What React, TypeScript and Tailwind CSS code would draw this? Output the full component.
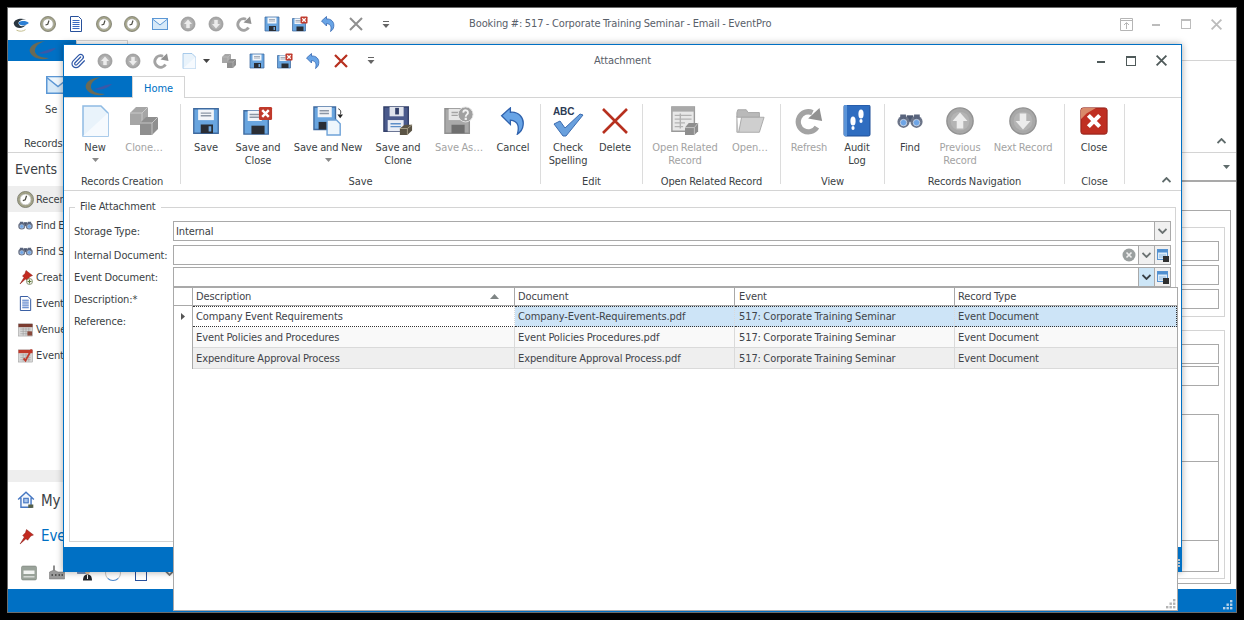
import type { ReactNode } from "react";
import { Paperclip } from "lucide-react";

function Ico({ s = 32, children }: { s?: number; children: ReactNode }) {
  return (
    <svg width={s} height={s} viewBox="0 0 32 32" className="block shrink-0">
      {children}
    </svg>
  );
}

type IconProps = { s?: number };

function Clock({ s = 16 }: IconProps) {
  return (
    <Ico s={s}>
      <circle cx="16" cy="16" r="13" fill="#fff" stroke="#a3a388" strokeWidth="4" />
      <circle cx="16" cy="16" r="15.2" fill="none" stroke="#5f6052" strokeWidth="1.2" />
      <circle cx="16" cy="16" r="10.5" fill="none" stroke="#77776a" strokeWidth="1" />
      <path d="M18 9 L15.5 16.5 L11 18" fill="none" stroke="#4c4c44" strokeWidth="2.4" />
    </Ico>
  );
}

function DocLines({ s = 16 }: IconProps) {
  return (
    <Ico s={s}>
      <path d="M5 1 H21 L27 7 V31 H5 Z" fill="#fff" stroke="#27509b" strokeWidth="2" />
      <path d="M9 9 H23 M9 13 H23 M9 17 H23 M9 21 H23 M9 25 H23" stroke="#3b6bc0" strokeWidth="2" />
    </Ico>
  );
}

function Mail({ s = 16 }: IconProps) {
  return (
    <Ico s={s}>
      <rect x="1" y="5" width="30" height="22" fill="#d6e9f8" stroke="#5b97d5" strokeWidth="2" />
      <path d="M1 6 L16 18 L31 6" fill="#eef6fc" stroke="#5b97d5" strokeWidth="2" />
    </Ico>
  );
}

function ArrowCircle({ s = 16, down = false }: IconProps & { down?: boolean }) {
  return (
    <Ico s={s}>
      <circle cx="16" cy="16" r="14" fill="#a8a8a8" stroke="#929292" strokeWidth="1.5" />
      <circle cx="16" cy="16" r="10" fill="#b4b4b4" />
      <path
        d={down ? "M16 25 L24 16 H19.5 V8 H12.5 V16 H8 Z" : "M16 7 L24 16 H19.5 V24 H12.5 V16 H8 Z"}
        fill="#ececec"
      />
    </Ico>
  );
}

function Refresh({ s = 16 }: IconProps) {
  return (
    <Ico s={s}>
      <path d="M25 23 A11.5 11.5 0 1 1 20 6.5" fill="none" stroke="#a3a3a3" strokeWidth="6" />
      <path d="M15 13 L31 16 L28 1 Z" fill="#919191" />
    </Ico>
  );
}

function Floppy({ s = 32, tone = "#69a5df" }: IconProps & { tone?: string }) {
  return (
    <Ico s={s}>
      <path d="M2 2 H30 V30 H2 Z" fill={tone} stroke="#3f6a9f" strokeWidth="1.5" />
      <rect x="7" y="3" width="18" height="12" fill="#f2f5f9" />
      <path d="M10 7 H22 M10 10 H22" stroke="#8b96a5" strokeWidth="1.5" />
      <rect x="10" y="20" width="14" height="10" fill="#2a2e35" />
      <rect x="19" y="22" width="3" height="6" fill="#6ea6dc" />
    </Ico>
  );
}

function SaveClose({ s = 32 }: IconProps) {
  return (
    <Ico s={s}>
      <path d="M1 5 H27 V30 H1 Z" fill="#69a5df" stroke="#3f6a9f" strokeWidth="1.5" />
      <rect x="5" y="5" width="15" height="11" fill="#f2f5f9" />
      <path d="M7 9 H17 M7 12 H17" stroke="#8b96a5" strokeWidth="1.5" />
      <rect x="9" y="21" width="14" height="9" fill="#2a2e35" />
      <rect x="17" y="1" width="14" height="14" rx="1.5" fill="#c0392b" />
      <path d="M20.5 4.5 L27.5 11.5 M27.5 4.5 L20.5 11.5" stroke="#fff" strokeWidth="2.6" />
    </Ico>
  );
}

function SaveNew({ s = 32 }: IconProps) {
  return (
    <Ico s={s}>
      <path d="M1 1 H24 V25 H1 Z" fill="#69a5df" stroke="#3f6a9f" strokeWidth="1.5" />
      <rect x="5" y="1" width="15" height="11" fill="#f2f5f9" />
      <path d="M7 5 H17 M7 8 H17" stroke="#8b96a5" strokeWidth="1.5" />
      <rect x="6" y="17" width="10" height="8" fill="#2a2e35" />
      <path d="M15 15 H25 L29 19 V31 H15 Z" fill="#eef6fc" stroke="#6fa3d8" strokeWidth="1.5" />
      <path d="M27 3 C30 4 30 7 29 9" fill="none" stroke="#222" strokeWidth="1" />
      <path d="M26 9 H32 L29 13 Z" fill="#222" />
    </Ico>
  );
}

function SaveClone({ s = 32 }: IconProps) {
  return (
    <Ico s={s}>
      <path d="M1 1 H27 V27 H1 Z" fill="#4a5a8c" stroke="#33406a" strokeWidth="1.5" />
      <rect x="7" y="1" width="15" height="10" fill="#dfe3ec" />
      <rect x="13" y="2" width="4" height="7" fill="#33406a" />
      <rect x="5" y="15" width="17" height="12" fill="#e9edf5" />
      <path d="M8 19 H19 M8 22 H19" stroke="#5d8ec8" strokeWidth="1.5" />
      <path d="M18 24 L23 20 H31 V26 L26 31 H18 Z" fill="#5a5344" />
      <path d="M18 24 H26 V31 M26 24 L31 20" fill="none" stroke="#a89f88" strokeWidth="1" />
    </Ico>
  );
}

function SaveAs({ s = 32 }: IconProps) {
  return (
    <Ico s={s}>
      <path d="M1 3 H27 V29 H1 Z" fill="#a9a9a9" stroke="#909090" strokeWidth="1.5" />
      <rect x="5" y="3" width="16" height="12" fill="#e6e6e6" />
      <path d="M8 7 H18 M8 10 H18" stroke="#a3a3a3" strokeWidth="1.5" />
      <rect x="8" y="20" width="14" height="9" fill="#6f6f6f" />
      <circle cx="23" cy="9" r="8" fill="#a0a0a0" stroke="#e6e6e6" strokeWidth="1" />
      <path d="M20.5 7 C21 3.5 26 4 25.5 7.5 C25.3 9 23.2 9 23.2 11.5" fill="none" stroke="#f2f2f2" strokeWidth="2" />
      <rect x="22" y="12.5" width="2.4" height="2.4" fill="#f2f2f2" />
    </Ico>
  );
}

function Undo({ s = 32 }: IconProps) {
  return (
    <Ico s={s}>
      <path
        d="M3 10 L13 1 L13 6 C22 5 29 12 27.5 21 C27 26 24 29 21 31 C23 24 23 16 13 15 L13 20 Z"
        fill="#68a4e6"
        stroke="#2f62ad"
        strokeWidth="1.5"
      />
    </Ico>
  );
}

function Cross({ s = 16, color = "#8f8f8f", w = 4 }: IconProps & { color?: string; w?: number }) {
  return (
    <Ico s={s}>
      <path d="M4 4 L28 28 M28 4 L4 28" stroke={color} strokeWidth={w} />
    </Ico>
  );
}

function NewDoc({ s = 32 }: IconProps) {
  return (
    <Ico s={s}>
      <path d="M4 1 H22 L29 8 V31 H4 Z" fill="#e9f3fb" stroke="#8fbbe4" strokeWidth="1.5" />
      <path d="M4 31 L29 8 V31 Z" fill="#f6fafe" />
    </Ico>
  );
}

function Cubes({ s = 32 }: IconProps) {
  return (
    <Ico s={s}>
      <path d="M2 8 L8 2 H20 V14 L14 20 H2 Z" fill="#a6a6a6" />
      <path d="M2 8 H14 V20 M14 8 L20 2" fill="none" stroke="#c9c9c9" strokeWidth="1" />
      <path d="M12 18 L18 12 H30 V24 L24 30 H12 Z" fill="#8f8f8f" />
      <path d="M12 18 H24 V30 M24 18 L30 12" fill="none" stroke="#c4c4c4" strokeWidth="1" />
    </Ico>
  );
}

function CheckAbc({ s = 32 }: IconProps) {
  return (
    <Ico s={s}>
      <text x="1" y="10" fontSize="10" fontWeight="700" fill="#2b3a55" fontFamily="'Liberation Sans', sans-serif">
        ABC
      </text>
      <path d="M2 19 L8 16 L13 23 L28 9 L31 10 L14 31 H11 Z" fill="#69a0dd" stroke="#3c6cb0" strokeWidth="1" />
    </Ico>
  );
}

function OpenRelated({ s = 32 }: IconProps) {
  return (
    <Ico s={s}>
      <path d="M2 1 H26 V27 H2 Z" fill="#e8e8e8" stroke="#9a9a9a" strokeWidth="1.5" />
      <rect x="2" y="1" width="24" height="5" fill="#a9a9a9" />
      <path d="M5 10 H23 M5 14 H23 M5 18 H16 M5 22 H14 M11 8 V24" stroke="#b2b2b2" strokeWidth="1.5" />
      <path d="M16 23 L20 18 H30 V27 L26 31 H16 Z" fill="#8e8e8e" />
      <path d="M16 23 H26 V31 M26 23 L30 18" fill="none" stroke="#c5c5c5" strokeWidth="1" />
    </Ico>
  );
}

function Folder({ s = 32 }: IconProps) {
  return (
    <Ico s={s}>
      <path d="M2 7 L3 4 H12 L14 7 H26 V12 H2 Z" fill="#b9b9b9" stroke="#a5a5a5" />
      <path d="M2 11 V28 H26 L31 12 H7 L4 28" fill="#cfcfcf" stroke="#a8a8a8" />
    </Ico>
  );
}

function AuditBook({ s = 32 }: IconProps) {
  return (
    <Ico s={s}>
      <rect x="3" y="0" width="26" height="31" rx="1.5" fill="#2f6dc0" stroke="#1f4f97" />
      <rect x="3" y="0" width="3" height="31" fill="#5b94d8" />
      <ellipse cx="12" cy="16" rx="2.6" ry="4.5" fill="#fff" />
      <ellipse cx="12" cy="23" rx="1.6" ry="2" fill="#fff" />
      <ellipse cx="20" cy="9" rx="2.6" ry="4.5" fill="#fff" />
      <ellipse cx="20" cy="16" rx="1.6" ry="2" fill="#fff" />
    </Ico>
  );
}

function Binoculars({ s = 32 }: IconProps) {
  return (
    <Ico s={s}>
      <rect x="12" y="9" width="8" height="8" fill="#4c5770" />
      <circle cx="8" cy="17" r="7.5" fill="#6b7488" />
      <circle cx="24" cy="17" r="7.5" fill="#6b7488" />
      <rect x="4" y="8" width="7" height="6" fill="#59647d" />
      <rect x="21" y="8" width="7" height="6" fill="#59647d" />
      <circle cx="8" cy="18" r="4" fill="#6ea5e6" stroke="#cfd9e8" />
      <circle cx="24" cy="18" r="4" fill="#6ea5e6" stroke="#cfd9e8" />
    </Ico>
  );
}

function CloseBox({ s = 32 }: IconProps) {
  return (
    <Ico s={s}>
      <rect x="2" y="2" width="28" height="28" rx="2.5" fill="#bf2f22" stroke="#8f1f16" />
      <path d="M2 14 L2 4 L4 2 H18 L8 8 Z" fill="#d98a6a" />
      <path d="M10 10 L22 22 M22 10 L10 22" stroke="#fff" strokeWidth="4.5" />
    </Ico>
  );
}

function Pin({ s = 16, plus = false }: IconProps & { plus?: boolean }) {
  return (
    <Ico s={s}>
      <path d="M16 3 L29 13 L24 15 L18 23 L15 20 L4 30 L12 17 L9 14 L14 9 Z" fill="#c22a20" stroke="#8a1a14" />
      {plus && (
        <>
          <circle cx="23" cy="25" r="6" fill="#f3f3ea" stroke="#6c7a55" strokeWidth="1.5" />
          <path d="M23 21 V29 M19 25 H27" stroke="#5c7a3c" strokeWidth="2" />
        </>
      )}
    </Ico>
  );
}

function CalendarIco({ s = 16, red = false }: IconProps & { red?: boolean }) {
  return (
    <Ico s={s}>
      <rect x="1" y="4" width="30" height="26" fill="#d8d8d8" stroke="#8f8f8f" />
      <rect x="1" y="4" width="30" height="7" fill={red ? "#c0392b" : "#7a3b30"} />
      <path d="M5 15 H27 M5 20 H27 M5 25 H27 M11 12 V29 M17 12 V29 M23 12 V29" stroke="#9a9a9a" strokeWidth="1.2" />
      {red ? (
        <path d="M12 22 L16 27 L29 3" fill="none" stroke="#c0392b" strokeWidth="4" />
      ) : (
        <rect x="20" y="20" width="10" height="9" fill="#8a4a3c" />
      )}
    </Ico>
  );
}

function House({ s = 18 }: IconProps) {
  return (
    <Ico s={s}>
      <path d="M2 15 L16 2 L30 15 M7 12 V29 H25 V12" fill="#f3f7fc" stroke="#4677c2" strokeWidth="2.5" />
      <rect x="12" y="13" width="8" height="8" fill="#a8c4ea" stroke="#4677c2" strokeWidth="2" />
      <rect x="20" y="24" width="9" height="6" fill="#55604a" />
    </Ico>
  );
}

function PrinterBox({ s = 16 }: IconProps) {
  return (
    <Ico s={s}>
      <rect x="1" y="2" width="30" height="28" rx="3" fill="#9aa39a" stroke="#6f766f" />
      <rect x="5" y="11" width="22" height="7" fill="#f2f4f2" />
      <rect x="5" y="22" width="22" height="3" fill="#d5d9d5" />
    </Ico>
  );
}

function Factory({ s = 16 }: IconProps) {
  return (
    <Ico s={s}>
      <rect x="8" y="1" width="4" height="12" fill="#8e8e8e" />
      <path d="M1 14 L10 10 L18 14 L31 14 V28 H1 Z" fill="#9a9a9a" stroke="#6f6f6f" />
      <path d="M5 20 H8 M12 20 H15 M19 20 H22 M25 20 H28" stroke="#3a3a3a" strokeWidth="3" />
    </Ico>
  );
}

function Person({ s = 16 }: IconProps) {
  return (
    <Ico s={s}>
      <rect x="1" y="5" width="18" height="12" fill="#6c8fc4" stroke="#3d5a8c" />
      <circle cx="21" cy="13" r="5" fill="#e9c39b" />
      <path d="M12 31 C12 22 16 19 21 19 C26 19 30 22 30 31 Z" fill="#23262b" />
      <path d="M21 20 V28" stroke="#f4f4f4" strokeWidth="2" />
    </Ico>
  );
}

function Logo() {
  return (
    <svg width="36" height="22" viewBox="0 0 36 22" className="block">
      <path d="M21 1 C8 2 3 9 7 14 C10 18 18 21 25 18 C17 18 10 15 11 10 C11.5 6 15 3 21 1 Z" fill="#6a6a55" />
      <path d="M14 13 C20 12 26 8 32 8 C28 12 21 15 14 13 Z" fill="#3a58a8" />
    </svg>
  );
}

function TinyLogo() {
  return (
    <Ico s={18}>
      <path d="M3 15 C4 8 14 5 25 8 C15 7 10 12 12 16 C14 21 20 21 25 17 C20 26 5 25 3 15 Z" fill="#2a3640" />
      <path d="M12 13 C17 10 25 10 30 14 C25 19 17 20 12 16 Z" fill="#2c7fd4" />
      <path d="M8 27 C14 30 20 29 24 26" fill="none" stroke="#b9b27a" strokeWidth="1.5" />
    </Ico>
  );
}

function Caret({ color = "#6b6b6b" }: { color?: string }) {
  return (
    <svg width="7" height="4" viewBox="0 0 7 4" className="block">
      <path d="M0 0 H7 L3.5 4 Z" fill={color} />
    </svg>
  );
}

function QatMore() {
  return (
    <svg width="8" height="7" viewBox="0 0 8 7" className="block">
      <path d="M1 0.5 H7" stroke="#666" />
      <path d="M0.5 3 H7.5 L4 7 Z" fill="#666" />
    </svg>
  );
}

function Chevron({ up = false, color = "#5f6b6b" }: { up?: boolean; color?: string }) {
  return (
    <svg width="9" height="6" viewBox="0 0 9 6" className="block">
      <path d={up ? "M0.5 5 L4.5 1 L8.5 5" : "M0.5 1 L4.5 5 L8.5 1"} fill="none" stroke={color} strokeWidth="1.8" />
    </svg>
  );
}

function Grip({ color = "#b3b3b3" }: { color?: string }) {
  return (
    <svg width="10" height="10" viewBox="0 0 10 10" className="block">
      {[
        [7, 0],
        [3.5, 3.5],
        [7, 3.5],
        [0, 7],
        [3.5, 7],
        [7, 7],
      ].map(([x, y]) => (
        <rect key={`${x}-${y}`} x={x} y={y} width="2.4" height="2.4" fill={color} />
      ))}
    </svg>
  );
}

function MiniCal() {
  return (
    <svg width="12" height="13" viewBox="0 0 12 13" className="block">
      <rect x="0.5" y="0.5" width="10" height="10" fill="#dcebf8" stroke="#5a95d2" />
      <rect x="0.5" y="0.5" width="10" height="3" fill="#4f8fd0" />
      <path d="M2 6 H9 M2 8 H9" stroke="#8db8e0" />
      <rect x="6" y="7" width="6" height="6" fill="#2f3030" />
    </svg>
  );
}

function Qi({ w = 28, children }: { w?: number; children: ReactNode }) {
  return (
    <div className="flex shrink-0 items-center justify-center" style={{ width: w }}>
      {children}
    </div>
  );
}

function RibbonBtn({
  w,
  icon,
  label,
  off = false,
  caret = false,
}: {
  w: number;
  icon: ReactNode;
  label: ReactNode;
  off?: boolean;
  caret?: boolean;
}) {
  return (
    <div className="flex shrink-0 flex-col items-center" style={{ width: w }}>
      <div className="mt-[1px] flex h-[32px] items-center justify-center">{icon}</div>
      <div className={`mt-[4px] whitespace-nowrap text-center leading-[13px] ${off ? "text-[#a3a3a3]" : "text-[#3b3f45]"}`}>
        {label}
      </div>
      {caret && (
        <div className="mt-[4px]">
          <Caret color="#8a8a8a" />
        </div>
      )}
    </div>
  );
}

function RibbonGroup({ w, caption, children }: { w: number; caption: string; children: ReactNode }) {
  return (
    <div className="flex h-[80px] shrink-0 flex-col border-r border-[#dcdcdc]" style={{ width: w }}>
      <div className="flex h-[71px] shrink-0">{children}</div>
      <div className="h-[14px] shrink-0 whitespace-nowrap text-center leading-[14px] text-[#3b3f45]">{caption}</div>
    </div>
  );
}

function Field({ label, right, text, star }: { label: string; right?: ReactNode; text?: string; star?: boolean }) {
  return (
    <div className="flex h-[20px] items-center pl-[4px] pr-[4px]">
      <div className="mt-[2px] w-[99px] shrink-0 whitespace-nowrap text-[#3b3f45]">
        {label}
        {star && <span className="text-[#3b3f45]">*</span>}
      </div>
      <div className="flex h-[20px] flex-1 items-center border border-[#a9a9a9] bg-white pl-[2px]">
        <span className="mt-[2px] flex-1 text-[#3b3f45]">{text}</span>
        {right}
      </div>
    </div>
  );
}

function DropBtn({ hot = false }: { hot?: boolean }) {
  return (
    <div
      className={`flex h-[18px] w-[16px] items-center justify-center border-l border-[#a9a9a9] ${hot ? "bg-[#cde6f7]" : "bg-[#f0f0f0]"}`}
    >
      <Chevron color={hot ? "#3a4045" : "#6b7272"} />
    </div>
  );
}

function CalBtn() {
  return (
    <div className="flex h-[18px] w-[16px] items-center justify-center border-l border-[#a9a9a9] bg-[#f0f0f0]">
      <MiniCal />
    </div>
  );
}

const rows = [
  ["Company Event Requirements", "Company-Event-Requirements.pdf", "517: Corporate Training Seminar", "Event Document"],
  ["Event Policies and Procedures", "Event Policies Procedures.pdf", "517: Corporate Training Seminar", "Event Document"],
  ["Expenditure Approval Process", "Expenditure Approval Process.pdf", "517: Corporate Training Seminar", "Event Document"],
];

function AttachmentGrid() {
  return (
    <div className="absolute left-[109px] top-[242px] h-[324px] w-[1005px] border border-[#a9a9a9] bg-white text-[#3f444a]">
      <div className="grid h-[18px] grid-cols-[19px_322px_220px_220px_1fr] border-b border-[#a9a9a9] leading-[17px]">
        <div className="border-r border-[#a9a9a9]" />
        <div className="flex items-center justify-between border-r border-[#a9a9a9] pl-[3px] pr-[15px]">
          <span>Description</span>
          <svg width="9" height="5" viewBox="0 0 9 5" className="block">
            <path d="M0 5 L4.5 0 L9 5 Z" fill="#7f8585" />
          </svg>
        </div>
        <div className="border-r border-[#a9a9a9] pl-[3px]">Document</div>
        <div className="border-r border-[#a9a9a9] pl-[4px]">Event</div>
        <div className="pl-[3px]">Record Type</div>
      </div>
      {rows.map((r, i) => (
        <div key={r[0]} className="grid h-[21px] grid-cols-[19px_322px_220px_220px_1fr] grid-rows-[21px] leading-[21px]">
          <div className="flex items-center justify-center border-r border-[#a9a9a9] bg-white">
            {i === 0 && (
              <svg width="4" height="7" viewBox="0 0 4 7" className="block">
                <path d="M0 0 L4 3.5 L0 7 Z" fill="#555" />
              </svg>
            )}
          </div>
          {i === 0 ? (
            <>
              <div className="border-y border-r border-dotted border-y-[#333] border-r-[#dadada] bg-white pl-[3px] leading-[20px]">
                {r[0]}
              </div>
              <div className="border-y border-r border-dotted border-y-[#333] border-r-[#dadada] bg-[#cde4f7] pl-[3px] leading-[20px]">
                {r[1]}
              </div>
              <div className="border-y border-r border-dotted border-y-[#333] border-r-[#dadada] bg-[#cde4f7] pl-[4px] leading-[20px]">
                {r[2]}
              </div>
              <div className="border border-l-0 border-dotted border-[#333] bg-[#cde4f7] pl-[3px] leading-[20px]">
                {r[3]}
              </div>
            </>
          ) : (
            <>
              {r.map((c, j) => (
                <div
                  key={c + j}
                  className={`h-[21px] border-b border-[#dadada] ${j < 3 ? "border-r" : ""} ${j === 2 ? "pl-[4px]" : "pl-[3px]"} ${i === 1 ? "bg-[#f9f9f9]" : "bg-[#efefef]"}`}
                >
                  {c}
                </div>
              ))}
            </>
          )}
        </div>
      ))}
      <div className="absolute bottom-[1px] right-[1px]">
        <Grip />
      </div>
    </div>
  );
}

function Attachment() {
  return (
    <div className="absolute left-[63px] top-[44px] flex h-[528px] w-[1119px] flex-col border border-[#0070c4] bg-white shadow-[0_0_7px_rgba(0,0,0,0.35)]">
      {/* title + quick access */}
      <div className="relative flex h-[31px] items-center">
        <Qi w={27}>
          <Paperclip size={16} color="#2f58a8" strokeWidth={1.8} />
        </Qi>
        <Qi><ArrowCircle /></Qi>
        <Qi><ArrowCircle down /></Qi>
        <Qi><Refresh /></Qi>
        <Qi><NewDoc s={16} /></Qi>
        <Qi w={12}>
          <div className="-ml-[6px]"><Caret color="#444" /></div>
        </Qi>
        <Qi><Cubes s={16} /></Qi>
        <Qi><Floppy s={16} /></Qi>
        <Qi><SaveClose s={16} /></Qi>
        <Qi><Undo s={16} /></Qi>
        <Qi><Cross color="#b7301f" w={4.5} /></Qi>
        <Qi w={32}><QatMore /></Qi>
        <div className="absolute left-[530px] top-[8px] text-[#59606a]">Attachment</div>
        <div className="ml-auto flex items-center">
          <Qi w={30}>
            <div className="mt-[2px] h-[2px] w-[8px] bg-[#4f5a5a]" />
          </Qi>
          <Qi w={30}>
            <div className="h-[10px] w-[10px] border border-t-2 border-[#4f5a5a]" />
          </Qi>
          <Qi w={30}>
            <Cross s={13} color="#4f5a5a" w={4.5} />
          </Qi>
          <div className="w-[5px]" />
        </div>
      </div>
      {/* tabs */}
      <div className="flex h-[22px] border-b border-[#d4d4d4]">
        <div className="flex h-[21px] w-[68px] items-center justify-center bg-[#0070c4]">
          <Logo />
        </div>
        <div className="h-[22px] w-[53px] border-x border-t border-[#d4d4d4] bg-white text-center leading-[24px] text-[#0070c4]">
          Home
        </div>
      </div>
      {/* ribbon */}
      <div className="relative flex h-[93px] border-b border-[#d4d4d4] pt-[6px]">
        <RibbonGroup w={117} caption="Records Creation">
          <RibbonBtn w={62} icon={<NewDoc />} label="New" caret />
          <RibbonBtn w={36} icon={<Cubes />} label="Clone…" off />
        </RibbonGroup>
        <RibbonGroup w={360} caption="Save">
          <RibbonBtn w={50} icon={<Floppy s={28} />} label="Save" />
          <RibbonBtn w={54} icon={<SaveClose s={30} />} label={<>Save and<br />Close</>} />
          <RibbonBtn w={86} icon={<SaveNew s={30} />} label="Save and New" caret />
          <RibbonBtn w={54} icon={<SaveClone s={30} />} label={<>Save and<br />Clone</>} />
          <RibbonBtn w={68} icon={<SaveAs s={30} />} label="Save As…" off />
          <RibbonBtn w={40} icon={<Undo s={28} />} label="Cancel" />
        </RibbonGroup>
        <RibbonGroup w={102} caption="Edit">
          <RibbonBtn w={54} icon={<CheckAbc />} label={<>Check<br />Spelling</>} />
          <RibbonBtn w={40} icon={<Cross s={32} color="#b7301f" w={2.6} />} label="Delete" />
        </RibbonGroup>
        <RibbonGroup w={138} caption="Open Related Record">
          <RibbonBtn w={84} icon={<OpenRelated s={30} />} label={<>Open Related<br />Record</>} off />
          <RibbonBtn w={46} icon={<Folder s={30} />} label="Open…" off />
        </RibbonGroup>
        <RibbonGroup w={104} caption="View">
          <RibbonBtn w={56} icon={<Refresh s={28} />} label="Refresh" off />
          <RibbonBtn w={40} icon={<AuditBook />} label={<>Audit<br />Log</>} />
        </RibbonGroup>
        <RibbonGroup w={180} caption="Records Navigation">
          <RibbonBtn w={50} icon={<Binoculars s={26} />} label="Find" />
          <RibbonBtn w={50} icon={<ArrowCircle s={30} />} label={<>Previous<br />Record</>} off />
          <RibbonBtn w={76} icon={<ArrowCircle s={30} down />} label="Next Record" off />
        </RibbonGroup>
        <RibbonGroup w={60} caption="Close">
          <RibbonBtn w={58} icon={<CloseBox s={30} />} label="Close" />
        </RibbonGroup>
        <div className="ml-[37px] mt-[73px]">
          <Chevron up />
        </div>
      </div>
      {/* form */}
      <div className="flex-1 px-[5px] pb-[5px] pt-[16px]">
        <div className="relative flex h-[335px] flex-col border border-[#d4d4d4] pt-[13px]">
          <div className="absolute -top-[8px] left-[5px] bg-white px-[5px] leading-[14px] text-[#3b3f45]">
            File Attachment
          </div>
          <Field label="Storage Type:" text="Internal" right={<DropBtn />} />
          <div className="h-[4px]" />
          <Field
            label="Internal Document:"
            right={
              <>
                <svg width="14" height="14" viewBox="0 0 14 14" className="mr-[2px] block">
                  <circle cx="7" cy="7" r="6.5" fill="#9a9f9f" />
                  <path d="M4.5 4.5 L9.5 9.5 M9.5 4.5 L4.5 9.5" stroke="#eee" strokeWidth="1.6" />
                </svg>
                <DropBtn />
                <CalBtn />
              </>
            }
          />
          <div className="h-[2px]" />
          <Field
            label="Event Document:"
            right={
              <>
                <DropBtn hot />
                <CalBtn />
              </>
            }
          />
          <div className="h-[2px]" />
          <Field label="Description:" star />
          <div className="h-[2px]" />
          <Field label="Reference:" />
        </div>
      </div>
      <div className="relative h-[24px] bg-[#0070c4]">
        <div className="absolute right-[1px] top-[12px] flex flex-col gap-[1px]">
          <div className="h-[2px] w-[3px] bg-[#b5c4cf]" />
          <div className="h-[2px] w-[3px] bg-[#b5c4cf]" />
          <div className="h-[2px] w-[3px] bg-[#b5c4cf]" />
        </div>
      </div>
      <AttachmentGrid />
    </div>
  );
}

function SideRow({ icon, label, on = false }: { icon: ReactNode; label: string; on?: boolean }) {
  return (
    <div className={`flex h-[26px] shrink-0 items-center pl-[7px] text-[#3b3f45] ${on ? "bg-[#eeeeee]" : ""}`}>
      <div className="flex w-[21px] justify-center">{icon}</div>
      <span className="mt-[2px]">{label}</span>
    </div>
  );
}

function Sidebar() {
  return (
    <div className="flex w-[240px] shrink-0 flex-col">
      <div className="h-[33px] shrink-0 pl-[7px] text-[14px] leading-[33px] text-[#3b3f45]">Events</div>
      <SideRow on icon={<Clock s={17} />} label="Recen" />
      <SideRow icon={<Binoculars s={15} />} label="Find E" />
      <SideRow icon={<Binoculars s={15} />} label="Find S" />
      <SideRow icon={<Pin plus />} label="Creat" />
      <SideRow icon={<DocLines s={15} />} label="Event" />
      <SideRow icon={<CalendarIco s={15} />} label="Venue" />
      <SideRow icon={<CalendarIco s={15} red />} label="Event" />
      <div className="flex-1" />
      <div className="h-[12px] shrink-0 bg-[#eeeeee]" />
      <div className="flex h-[36px] shrink-0 items-center pl-[9px] text-[15px] text-[#3b3f45]">
        <House />
        <span className="ml-[6px] mt-[2px]">My</span>
      </div>
      <div className="flex h-[36px] shrink-0 items-center pl-[10px] text-[15px] text-[#0070c4]">
        <Pin s={17} />
        <span className="ml-[6px]">Eve</span>
      </div>
      <div className="flex h-[35px] shrink-0 items-center pt-[3px]">
        <div className="w-[7px]" />
        <Qi><PrinterBox /></Qi>
        <Qi><Factory /></Qi>
        <Qi><Person /></Qi>
        <Qi>
          <div className="h-[16px] w-[16px] rounded-full border border-[#c4c4c4] border-b-[#4a85c9]" />
        </Qi>
        <Qi>
          <div className="h-[15px] w-[12px] border border-[#27509b]" />
        </Qi>
        <Qi><Chevron color="#777" /></Qi>
      </div>
    </div>
  );
}

function Backdrop() {
  return (
    <div className="flex h-[604px] w-[1228px] flex-col bg-white">
      <div className="relative flex h-[32px] shrink-0 items-center">
        <Qi w={26}><TinyLogo /></Qi>
        <Qi><Clock /></Qi>
        <Qi><DocLines /></Qi>
        <Qi><Clock /></Qi>
        <Qi><Clock /></Qi>
        <Qi><Mail /></Qi>
        <Qi><ArrowCircle /></Qi>
        <Qi><ArrowCircle down /></Qi>
        <Qi><Refresh /></Qi>
        <Qi><Floppy s={16} /></Qi>
        <Qi><SaveClose s={16} /></Qi>
        <Qi><Undo s={16} /></Qi>
        <Qi><Cross /></Qi>
        <Qi w={32}><QatMore /></Qi>
        <div className="absolute left-[461px] top-[8px] whitespace-nowrap text-[#59606a]">
          Booking #: 517 - Corporate Training Seminar - Email - EventPro
        </div>
        <div className="ml-auto flex items-center">
          <Qi w={30}>
            <svg width="13" height="13" viewBox="0 0 13 13" className="block">
              <path d="M0.5 0.5 H12.5 V12.5 H0.5 Z M0.5 2.5 H12.5 M6.5 11 V5 M4 7 L6.5 4.5 L9 7" fill="none" stroke="#b5b5b5" />
            </svg>
          </Qi>
          <Qi w={30}>
            <div className="mt-[2px] h-[2px] w-[8px] bg-[#bcbcbc]" />
          </Qi>
          <Qi w={30}>
            <div className="h-[10px] w-[10px] border border-t-2 border-[#bcbcbc]" />
          </Qi>
          <Qi w={30}>
            <Cross s={13} color="#bcbcbc" w={4.5} />
          </Qi>
          <div className="w-[5px]" />
        </div>
      </div>
      <div className="flex h-[21px] shrink-0 border-b border-[#d4d4d4]">
        <div className="flex h-[21px] w-[68px] items-center justify-center bg-[#0070c4]">
          <Logo />
        </div>
        <div className="h-[21px] w-[52px] border-x border-t border-[#d4d4d4]" />
      </div>
      <div className="flex h-[92px] shrink-0 items-end border-b border-[#d4d4d4]">
        <div className="relative flex h-[91px] w-[100px] flex-col justify-end pl-[16px] leading-[14px] text-[#3b3f45]">
          <div className="absolute left-[38px] top-[12px]">
            <Mail s={24} />
            <div className="-ml-[1px] mt-[6px]">Se</div>
          </div>
          <div className="mb-[1px]">Records</div>
        </div>
        <div className="mb-[8px] ml-auto mr-[10px]">
          <Chevron up />
        </div>
      </div>
      <div className="flex min-h-0 flex-1">
        <Sidebar />
        <div className="flex flex-1 flex-col">
          <div className="flex h-[27px] shrink-0 items-center justify-end pr-[6px]">
            <Caret color="#5f6b6b" />
          </div>
          <div className="h-[2px] shrink-0 bg-[#a9a9a9]" />
          <div className="mr-[5px] mt-[28px] flex h-[374px] flex-col gap-[13px] border border-[#a9a9a9] pl-[5px] pr-[5px] pt-[16px]">
            <div className="flex h-[90px] shrink-0 flex-col gap-[4px] border border-[#d4d4d4] pl-[5px] pr-[5px] pt-[13px]">
              <div className="h-[20px] border border-[#a9a9a9]" />
              <div className="h-[20px] border border-[#a9a9a9]" />
              <div className="h-[20px] border border-[#a9a9a9]" />
            </div>
            <div className="flex h-[249px] shrink-0 flex-col border border-[#d4d4d4] pl-[5px] pr-[5px] pt-[13px]">
              <div className="h-[20px] border border-[#a9a9a9]" />
              <div className="mt-[2px] h-[20px] border border-[#a9a9a9]" />
              <div className="mt-[28px] flex h-[158px] flex-col border border-[#a9a9a9]">
                <div className="h-[47px] border-b border-[#a9a9a9]" />
                <div className="h-[79px] border-b border-[#a9a9a9]" />
              </div>
            </div>
          </div>
        </div>
      </div>
      <div className="relative h-[23px] shrink-0 bg-[#0070c4]">
        <div className="absolute bottom-[2px] right-[3px]">
          <Grip color="#b8d3ea" />
        </div>
      </div>
    </div>
  );
}

export default function App() {
  return (
    <div className="relative h-[620px] w-[1244px] overflow-hidden bg-black pl-[7px] pt-[7px] font-['DejaVu_Sans_Condensed','DejaVu_Sans',sans-serif] text-[11px] tracking-[-0.1px] [word-spacing:-0.5px]">
      <div className="w-[1230px] border border-[#6d6d6d]">
        <Backdrop />
      </div>
      <Attachment />
    </div>
  );
}
